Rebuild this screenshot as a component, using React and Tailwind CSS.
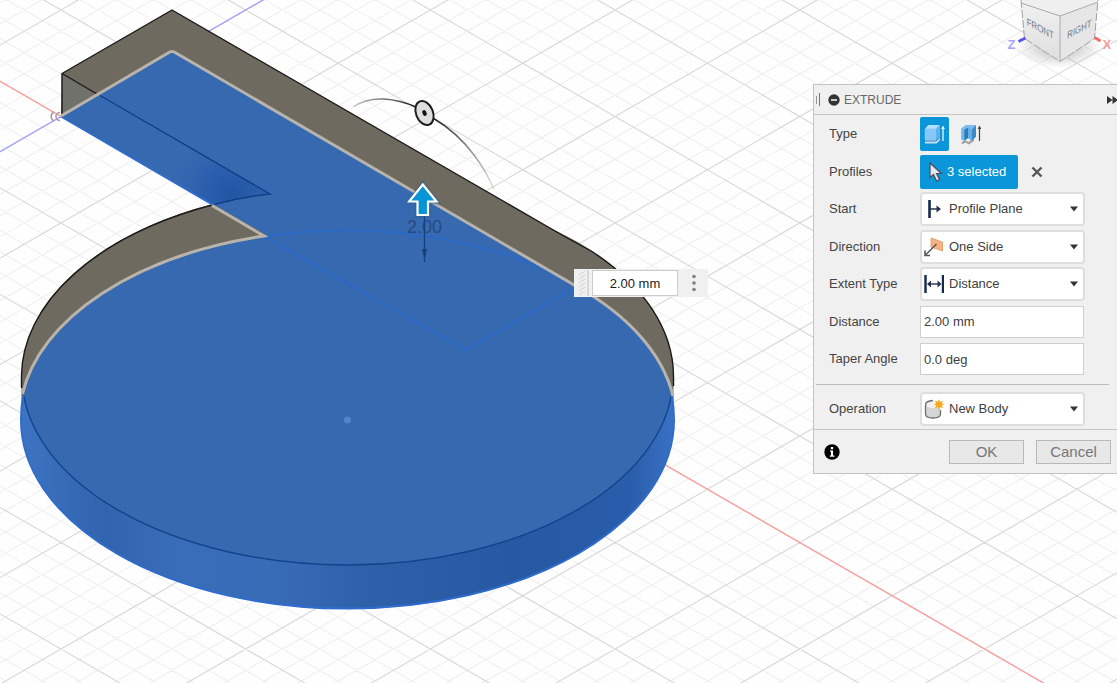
import React from "react";

const SLOPE = 53.25 / 92.35;
const ORIGIN = { x: 61, y: 116.5 };
const STEP = 21.3;

function gridLine(k, dir) {
  const at = (x) => ORIGIN.y + dir * SLOPE * (x - ORIGIN.x) + k * STEP;
  return `M-20 ${at(-20)}L2600 ${at(2600)}`;
}

function Grid() {
  const minor = [];
  const major = [];
  for (let k = -80; k <= 140; k++) {
    const list = k % 5 === 0 ? major : minor;
    list.push(gridLine(k, 1), gridLine(k, -1));
  }
  return (
    <g fill="none">
      <path d={minor.join("")} stroke="#f1f1f1" strokeWidth="1.2" />
      <path d={major.join("")} stroke="#dadada" strokeWidth="1.2" />
      <path d={gridLine(0, 1)} stroke="#ff9c9c" strokeWidth="1.3" />
      <path d={gridLine(0, -1)} stroke="#a3a0fa" strokeWidth="1.3" />
    </g>
  );
}

function Model() {
  return (
    <g>
      <defs>
        <linearGradient id="rim" gradientUnits="userSpaceOnUse" x1="21" y1="0" x2="674" y2="0">
          <stop offset="0" stopColor="#3d74c4" />
          <stop offset="0.05" stopColor="#386db8" />
          <stop offset="0.13" stopColor="#3263af" />
          <stop offset="0.24" stopColor="#3a6db9" />
          <stop offset="0.38" stopColor="#396cb7" />
          <stop offset="0.52" stopColor="#2f61ab" />
          <stop offset="0.75" stopColor="#2758a3" />
          <stop offset="0.93" stopColor="#295caa" />
          <stop offset="1" stopColor="#3a71c4" />
        </linearGradient>
        <radialGradient id="shade" gradientUnits="userSpaceOnUse" cx="232" cy="194" r="68">
          <stop offset="0" stopColor="#2155a4" />
          <stop offset="0.45" stopColor="#275aab" stopOpacity="0.7" />
          <stop offset="1" stopColor="#3769b1" stopOpacity="0" />
        </radialGradient>
        <clipPath id="bottomDisc">
          <ellipse cx="347.5" cy="420" rx="326.5" ry="189" />
        </clipPath>
      </defs>

      {/* grey side walls */}
      <g fill="#6f6a60">
        <ellipse cx="347.5" cy="376" rx="326" ry="189" />
        <rect x="21.5" y="376" width="652" height="44" />
        <path d="M62 73.500L172 10L577 244V290L61 116.500Z" />
      </g>
      <path d="M62 73.500V116L97 95Z" fill="#70716b" />
      <path
        d="M62 116.500V73.500L172 10L562 235Q580 245 592 251.500A326 189 0 0 1 673.500 376V386"
        fill="none"
        stroke="#1b1a18"
        strokeWidth="1.4"
        strokeLinejoin="round"
      />
      <path d="M21.500 388V376A326 189 0 0 1 213 204.800" fill="none" stroke="#1b1a18" strokeWidth="1.4" />
      <path d="M62 73.500L97 94" stroke="#1b1a18" strokeWidth="1.4" />

      {/* selected blue faces */}
      <ellipse cx="347.5" cy="420" rx="326.5" ry="189" fill="url(#rim)" />
      <g clipPath="url(#bottomDisc)">
        <ellipse cx="347.5" cy="376" rx="325.5" ry="189" fill="#3769b1" stroke="#12448c" strokeWidth="1.4" />
        <path d="M20 220H676V396H20Z" fill="#3769b1" />
      </g>
      <path d="M61 116.500L172 52L577 286L466 350Z" fill="#3769b1" />
      <path d="M97 94L270 194Q240 197 213 204.800L61 116.500Z" fill="url(#shade)" />
      <path d="M100 95.500L270 194Q240 197 213 204.800" fill="none" stroke="#103f84" strokeWidth="1.4" />

      {/* edges of the selected profiles */}
      <path d="M61 116.500L213 204.800" stroke="#2f6ccb" strokeWidth="2" />
      <path d="M23 396Q21 408 21 420A326.500 188.500 0 0 0 674 420Q674 408 672 396" fill="none" stroke="#2f6ccb" strokeWidth="2" />
      <path
        d="M264 236.500A326.500 189 0 0 1 577 286L466 350L264 236.500"
        fill="none"
        stroke="#2a69c5"
        strokeWidth="2"
      />
      <path
        d="M61 116L168 53Q172 50 176 53L575 285.500A326.500 189 0 0 1 673 396"
        fill="none"
        stroke="#b8b4ac"
        strokeWidth="3"
      />
      <path d="M212 205.500L264 236A326.500 189 0 0 0 22.500 394" fill="none" stroke="#b8b4ac" strokeWidth="3" />
      <circle cx="347.5" cy="420" r="3.5" fill="#5584cb" />
      <path d="M60 112.500A4 4 0 1 0 60 120.500M54 112a5 5 0 0 0 0 9" fill="none" stroke="#a99ba8" strokeWidth="1.6" />
    </g>
  );
}

function Manipulator() {
  return (
    <g>
      <defs>
        <linearGradient id="fadeIn" gradientUnits="userSpaceOnUse" x1="352" y1="0" x2="414" y2="0">
          <stop offset="0" stopColor="#333" stopOpacity="0.25" />
          <stop offset="1" stopColor="#222" />
        </linearGradient>
        <linearGradient id="fadeOut" gradientUnits="userSpaceOnUse" x1="434" y1="119" x2="494" y2="190">
          <stop offset="0" stopColor="#222" />
          <stop offset="1" stopColor="#555" stopOpacity="0.15" />
        </linearGradient>
      </defs>
      <path d="M353 107Q366 98 384 99Q400 100 416 107" fill="none" stroke="url(#fadeIn)" strokeWidth="1.5" />
      <path d="M433 118Q458 133 474 155Q487 172 494 190" fill="none" stroke="url(#fadeOut)" strokeWidth="1.5" />
      <ellipse cx="424.5" cy="113" rx="8.5" ry="12.5" transform="rotate(-22 424.5 113)" fill="#dedede" stroke="#1d1d1d" strokeWidth="2" />
      <ellipse cx="424.5" cy="113" rx="2" ry="3" transform="rotate(-22 424.5 113)" fill="#111" />
      <text x="424.5" y="233" textAnchor="middle" fontFamily="'Liberation Sans', Arial, sans-serif" fontSize="18" fill="#26497f">
        2.00
      </text>
      <path d="M424.500 216V262" stroke="#17407f" strokeWidth="1.3" />
      <path d="M422 249H427L424.500 260Z" fill="#17407f" />
      <path
        d="M422.800 184L437 202H428.500V215.500H417V202H408.700Z"
        fill="#0696d7"
        stroke="#2d5f8e"
        strokeWidth="4.5"
        strokeOpacity="0.5"
      />
      <path d="M422.800 184.500L436.500 201.500H428V215H417.500V201.500H409.200Z" fill="#0696d7" stroke="#fff" strokeWidth="2.2" />
    </g>
  );
}

function ViewCube() {
  return (
    <svg className="pointer-events-none absolute right-0 top-0 h-[80px] w-[137px]" viewBox="980 0 137 80" aria-label="View cube">
      <defs>
        <radialGradient id="cubeShadow">
          <stop offset="0" stopColor="#777" stopOpacity="0.6" />
          <stop offset="1" stopColor="#999" stopOpacity="0" />
        </radialGradient>
        <linearGradient id="cubeLeft" x1="0" y1="0" x2="0" y2="1">
          <stop offset="0" stopColor="#f1f1f1" />
          <stop offset="1" stopColor="#dedede" />
        </linearGradient>
      </defs>
      <ellipse cx="1059" cy="47" rx="43" ry="21" fill="url(#cubeShadow)" />
      <path d="M1021 -2V3L1060 16L1098 2V-2Z" fill="#efefef" />
      <path d="M1021 3L1060 16V61.500L1024.500 38.500Z" fill="url(#cubeLeft)" />
      <path d="M1098 2L1060 16V61.500L1094.500 38.500Z" fill="#e6e6e6" />
      <path d="M1021 3L1060 16L1098 2M1060 16V61.500" fill="none" stroke="#aaa" strokeWidth="1" />
      <path d="M1021 0L1024.500 38.500L1060 61.500L1094.500 38.500L1098 0" fill="none" stroke="#a2a2a2" strokeWidth="1" strokeDasharray="8 2" />
      <g fontFamily="'Liberation Sans', Arial, sans-serif" fontSize="9" fill="#777777">
        <text transform="matrix(0.87 0.46 0.08 1.15 1027 25)">FRONT</text>
        <text transform="matrix(0.87 -0.46 -0.08 1.15 1067 39)">RIGHT</text>
      </g>
      <path d="M1018.500 41.500L1025.500 38" stroke="#5656e8" strokeWidth="3" />
      <path d="M1094.500 37.500L1100.500 41" stroke="#f26a6a" strokeWidth="3" />
      <g fontFamily="'Liberation Sans', Arial, sans-serif" fontSize="13" fontWeight="700">
        <text x="1007.5" y="49" fill="#a6a3f8">Z</text>
        <text x="1102.5" y="49" fill="#f79c9c">X</text>
      </g>
    </svg>
  );
}

const iconBox = "h-5 w-5 shrink-0";

function StartIcon() {
  return (
    <svg className={iconBox} viewBox="0 0 20 20">
      <path d="M5.500 1V19" stroke="#14294f" strokeWidth="2.6" />
      <path d="M6 10H16" stroke="#2a3450" strokeWidth="1.5" />
      <path d="M12.500 6.500L17 10L12.500 13.500Z" fill="#2a3450" />
    </svg>
  );
}

function DirectionIcon() {
  return (
    <svg className={iconBox} viewBox="0 0 20 20">
      <path d="M7 1L18.500 5V14L7 10Z" fill="#f5b384" stroke="#e0955f" strokeWidth="0.8" />
      <path d="M12.500 7L1.500 18" stroke="#555" strokeWidth="1.5" />
      <path d="M1 13.500V18.500H6" fill="none" stroke="#555" strokeWidth="1.6" />
    </svg>
  );
}

function ExtentIcon() {
  return (
    <svg className={iconBox} viewBox="0 0 20 20">
      <path d="M1.500 1V19M19 1V19" stroke="#14294f" strokeWidth="2.4" />
      <path d="M4 10H16" stroke="#2a3450" strokeWidth="1.4" />
      <path d="M7 6.500L3 10L7 13.500ZM13.500 6.500L17.500 10L13.500 13.500Z" fill="#2a3450" />
    </svg>
  );
}

function BodyIcon() {
  return (
    <svg className={iconBox} viewBox="0 0 20 20">
      <path d="M1.500 5Q1.500 2 9 2Q16.500 2 16.500 5V15Q16.500 19 9 19Q1.500 19 1.500 15Z" fill="#d5d5d5" />
      <ellipse cx="9" cy="5.5" rx="7" ry="3.5" fill="#f1f1f1" />
      <path d="M9 1.500Q1.500 2 1.500 6V15Q1.500 19 9 19Q16.500 19 16.500 15V11" fill="none" stroke="#707070" strokeWidth="1.3" />
      <path d="M15 0L16.200 3L19 1.500L17.800 4.300L20 5.500L17.800 6.500L19 9.300L16.200 8L15 11L13.800 8L11 9.300L12.200 6.500L10 5.500L12.200 4.300L11 1.500L13.800 3Z" fill="#fba71b" />
    </svg>
  );
}

function SolidIcon() {
  return (
    <svg className="h-6 w-6" viewBox="0 0 24 24">
      <path d="M2 18H13L17 14.500V18L13.500 21.500H2Z" fill="#c4e2f6" />
      <path d="M2 19H13L17 15.500" fill="none" stroke="#2c74ad" strokeWidth="1" />
      <path d="M1.800 7.500Q4 3 6 3H16Q17 3 17 4V14L13 18H2.500Q1.800 18 1.800 17.500Z" fill="#5fb2ee" />
      <rect x="1.800" y="6.500" width="11.200" height="11.500" rx="1.200" fill="#86c8fa" />
      <path d="M2.200 6.800L5.500 3H16.500L13 6.800Z" fill="#b5e0ff" />
      <path d="M20 6V19" stroke="#fff" strokeWidth="1.2" />
      <path d="M18.200 7L20 3.500L21.800 7Z" fill="#fff" />
    </svg>
  );
}

function ThinIcon() {
  return (
    <svg className="h-6 w-6" viewBox="0 0 24 24">
      <path d="M1.500 20L5 18L8.500 20L14 15.500V19L9 22.500L5.500 20.500L2 22.500Z" fill="#a3a3a3" />
      <path d="M1.500 6.500L5.500 3.500L9 4.500L16 3V14.500L12 18.500L8 16L4.500 18.500L1.500 17.500Z" fill="#4d9dd8" />
      <path d="M1.500 6.500L4.500 7.500V18.500L1.500 17.500Z" fill="#6fb9ec" />
      <path d="M4.500 7.500L8 5.500V16L4.500 18.500Z" fill="#2e7ab5" />
      <path d="M8 5.500L12 7.500V18.500L8 16Z" fill="#63b0e8" />
      <path d="M12 7.500L16 3.500V14.500L12 18.500Z" fill="#3c89c6" />
      <path d="M1.500 6.500L5.500 3H16L12 7.500L8 5.500L4.500 7.500Z" fill="#7cbfee" />
      <path d="M19.500 5V19" stroke="#444" strokeWidth="1.2" />
      <path d="M17.700 7L19.500 3.500L21.300 7Z" fill="#444" />
    </svg>
  );
}

function Row({ label, htmlFor, children }) {
  return (
    <div className="flex h-[34px] items-center">
      <label htmlFor={htmlFor} className="w-[91px] shrink-0">
        {label}
      </label>
      {children}
    </div>
  );
}

function SelectField({ id, label, icon, options }) {
  return (
    <Row label={label} htmlFor={id}>
      <div className="relative h-[34px] w-[165px]">
        <select
          id={id}
          className="h-full w-full appearance-none rounded-sm border-2 border-[#dedede] bg-white pl-[27px] pr-6 text-[13px] text-[#404040] outline-none"
        >
          {options.map((o) => (
            <option key={o}>{o}</option>
          ))}
        </select>
        <span className="pointer-events-none absolute inset-y-0 left-1 flex items-center">{icon}</span>
        <span className="pointer-events-none absolute inset-y-0 right-[7px] flex items-center">
          <svg className="h-[6px] w-2" viewBox="0 0 8 6">
            <path d="M0 0.500H8L4 5.500Z" fill="#333" />
          </svg>
        </span>
      </div>
    </Row>
  );
}

function TextField({ id, label, value }) {
  return (
    <Row label={label} htmlFor={id}>
      <input
        id={id}
        defaultValue={value}
        className="h-8 w-[164px] border border-[#cfcfcf] bg-white px-[3px] text-[13px] text-[#404040] outline-none"
      />
    </Row>
  );
}

function ExtrudePanel() {
  return (
    <form
      className="absolute right-0 top-[84px] w-[304px] border-y border-l border-[#c3c3c3] bg-[#f0f0f0] text-[13px] text-[#444444]"
      onSubmit={(e) => e.preventDefault()}
    >
      <header className="flex h-[30px] items-center border-b border-[#c6c6c6] pl-[2px] text-[12px] text-[#686868]">
        <span className="h-[8px] w-px bg-[#999]" />
        <span className="ml-[2px] h-[13px] w-px bg-[#777]" />
        <button type="button" aria-label="Collapse" className="ml-[8px] h-3 w-3">
          <svg viewBox="0 0 12 12" className="h-3 w-3">
            <circle cx="6" cy="6" r="5.7" fill="#333" />
            <path d="M3 6H9" stroke="#fff" strokeWidth="1.5" />
          </svg>
        </button>
        <h2 className="ml-[4px] grow">EXTRUDE</h2>
        <button type="button" aria-label="Dock" className="h-3 w-[10px] overflow-hidden">
          <svg viewBox="0 0 10 12" className="h-3 w-[10px]">
            <path d="M0 2L5.500 6L0 10ZM5.500 2L11 6L5.500 10Z" fill="#333" />
          </svg>
        </button>
      </header>

      <div className="flex h-[264px] flex-col justify-between pb-[3px] pl-[15px] pt-[2px]">
        <div className="flex h-[34px] items-center">
          <span className="w-[91px] shrink-0">Type</span>
          <button type="button" aria-label="Solid" className="flex h-[34px] w-[29px] items-center justify-center rounded-xs bg-[#0a96d8]">
            <SolidIcon />
          </button>
          <button type="button" aria-label="Thin" className="ml-2 flex h-[34px] w-[29px] items-center justify-center">
            <ThinIcon />
          </button>
        </div>
        <div className="flex h-[34px] items-center">
          <span className="w-[91px] shrink-0">Profiles</span>
          <button type="button" className="flex h-[34px] w-[98px] items-center rounded-xs bg-[#0a96d8] pl-[9px] text-white">
            <svg className="h-5 w-[14px]" viewBox="0 0 14 20">
              <path d="M1 1V15.500L4.500 12.500L7.500 19L10.500 17.500L7.500 11.500H12.500Z" fill="#e6e6ee" stroke="#4a4a58" strokeWidth="1.2" />
            </svg>
            <span className="ml-[4px]">3 selected</span>
          </button>
          <button type="button" aria-label="Clear selection" className="ml-[13px] h-3 w-3">
            <svg viewBox="0 0 12 12" className="h-3 w-3">
              <path d="M1.500 1.500L10.500 10.500M10.500 1.500L1.500 10.500" stroke="#555" strokeWidth="2.4" />
            </svg>
          </button>
        </div>
        <SelectField id="start" label="Start" icon={<StartIcon />} options={["Profile Plane", "Offset Plane", "Object"]} />
        <SelectField id="direction" label="Direction" icon={<DirectionIcon />} options={["One Side", "Two Sides", "Symmetric"]} />
        <SelectField id="extent" label="Extent Type" icon={<ExtentIcon />} options={["Distance", "To Object", "All"]} />
        <TextField id="distance" label="Distance" value="2.00 mm" />
        <TextField id="taper" label="Taper Angle" value="0.0 deg" />
      </div>

      <hr className="ml-[2px] mr-2 mt-[5px] border-[#bdbdbd]" />
      <div className="pb-[3px] pl-[15px] pt-[7px]">
        <SelectField id="operation" label="Operation" icon={<BodyIcon />} options={["New Body", "Join", "Cut", "Intersect"]} />
      </div>

      <footer className="flex h-[44px] items-center border-t border-[#c6c6c6] pl-[10px] pr-[6px] text-[15px] text-[#777777]">
        <button type="button" aria-label="Information" className="h-4 w-4">
          <svg viewBox="0 0 16 16" className="h-4 w-4">
            <circle cx="8" cy="8" r="7.7" fill="#000" />
            <path d="M6 6.500H9V11.500H10.500V12.800H5.800V11.500H7V7.800H6ZM6.800 3H9.200V5.300H6.800Z" fill="#fff" />
          </svg>
        </button>
        <div className="ml-auto flex gap-3">
          <button type="submit" className="h-6 w-[75px] border border-[#b9b9b9] bg-[#e8e8e8]">
            OK
          </button>
          <button type="button" className="h-6 w-[75px] border border-[#b9b9b9] bg-[#e8e8e8]">
            Cancel
          </button>
        </div>
      </footer>
    </form>
  );
}

function DistanceBox() {
  return (
    <div className="absolute left-[574px] top-[269px] flex h-[28px] w-[134px] items-center bg-[#f0f0f0]">
      <svg className="ml-[5px] h-[26px] w-[6px]" viewBox="0 0 6 26">
        <path d="M0 5L6 1M0 9L6 5M0 13L6 9M0 17L6 13M0 21L6 17M0 25L6 21" stroke="#cfcfcf" strokeWidth="1" />
      </svg>
      <span className="ml-[2px] h-[26px] w-[2px] bg-[#d6d6d6]" />
      <input
        aria-label="Distance value"
        defaultValue="2.00 mm"
        className="ml-[3px] h-[26px] w-[86px] border border-[#cccccc] bg-white text-center text-[13px] text-[#1c1c1c] outline-none"
      />
      <button type="button" aria-label="More options" className="ml-[13px] h-5 w-[6px]">
        <svg viewBox="0 0 6 20" className="h-5 w-[6px]">
          <g fill="#808080">
            <circle cx="3" cy="3.5" r="1.8" />
            <circle cx="3" cy="10" r="1.8" />
            <circle cx="3" cy="16.5" r="1.8" />
          </g>
        </svg>
      </button>
    </div>
  );
}

export default function App() {
  return (
    <main className="relative h-screen w-full overflow-hidden bg-[#fefefe] font-['Liberation_Sans',Arial,sans-serif]">
      <svg className="block h-full w-full" role="img" aria-label="Model canvas">
        <Grid />
        <Model />
        <Manipulator />
      </svg>
      <ViewCube />
      <DistanceBox />
      <ExtrudePanel />
    </main>
  );
}
